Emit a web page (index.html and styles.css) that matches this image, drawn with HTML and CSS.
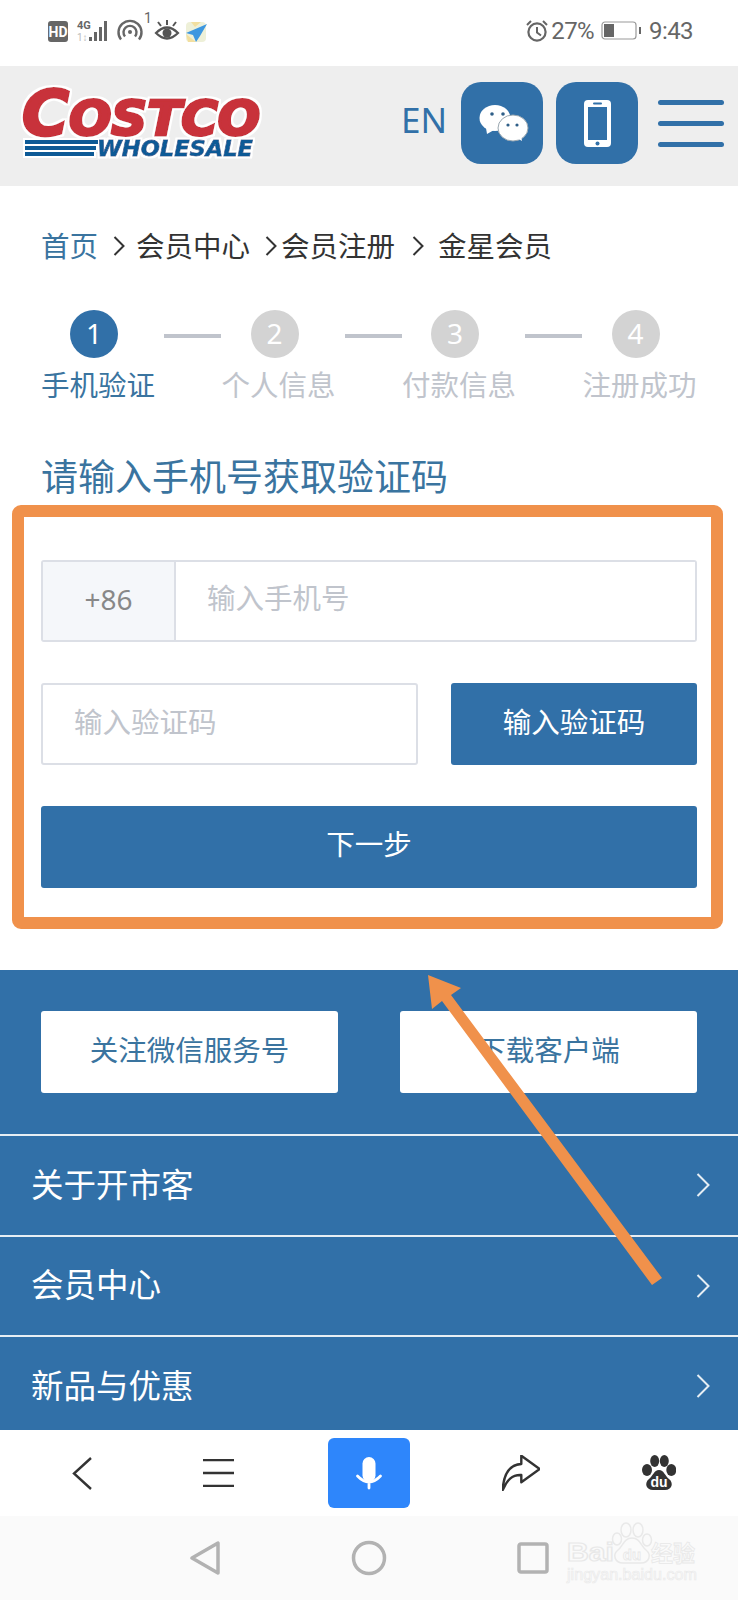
FILE: index.html
```html
<!DOCTYPE html>
<html lang="zh">
<head>
  <meta charset="UTF-8">
  <title>开市客 · 金星会员注册</title>
  <meta name="viewport" content="width=device-width, initial-scale=1.0">
  <link rel="stylesheet" href="styles.css">
</head>
<body>
<div class="screen">

  <div class="status-bar">
    <svg class="status-left" width="170" height="44" viewBox="40 6 170 44">
      <rect x="48" y="21" width="20" height="21" rx="3" fill="#666"/>
      <text x="58" y="36.500" class="st-hd">HD</text>
      <text x="77" y="29" class="st-4g">4G</text>
      <text x="77" y="41" class="st-1">1↕</text>
      <rect x="89" y="37" width="3" height="4" fill="#666"/>
      <rect x="94" y="32" width="3" height="9" fill="#666"/>
      <rect x="99" y="27" width="3" height="14" fill="#666"/>
      <rect x="104" y="21" width="3" height="20" fill="#666"/>
      <path d="M121 39.500a11.500 11.500 0 1 1 18 0" fill="none" stroke="#666" stroke-width="2.400"/>
      <path d="M125 36.500a6.500 6.500 0 1 1 10 0" fill="none" stroke="#666" stroke-width="2.400"/>
      <circle cx="130" cy="32" r="2" fill="#666"/>
      <text x="144" y="23" class="st-n">1</text>
      <path d="M156 33q11 -11 22 0q-11 11 -22 0z" fill="none" stroke="#555" stroke-width="2.200"/>
      <circle cx="167" cy="33" r="4.500" fill="#555"/>
      <path d="M158 22l3 4M167 20v5M176 22l-3 4" stroke="#555" stroke-width="2"/>
      <rect x="186" y="22" width="20" height="20" rx="4" fill="#eef0d8"/>
      <path d="M186 34l10 8h-8zM191 22h10l-6 5z" fill="#f2dfa0"/>
      <path d="M207 24l-21 9 7 2 3 7 4-6z" fill="#3d97e0"/>
    </svg>
    <div class="status-right">
      <svg width="22" height="24" viewBox="0 0 22 24">
        <circle cx="11" cy="13" r="8.600" fill="none" stroke="#666" stroke-width="2.200"/>
        <path d="M11 8v5.500l4 3" fill="none" stroke="#666" stroke-width="2"/>
        <path d="M1 6l4-4M21 6l-4-4" stroke="#666" stroke-width="2"/>
      </svg>
      <span class="pct">27%</span>
      <svg class="battery" width="41" height="20" viewBox="0 0 41 20">
        <rect x="1" y="1" width="34" height="17" rx="3" fill="#fff" stroke="#999" stroke-width="1.200"/>
        <rect x="3" y="3" width="10" height="13" fill="#666"/>
        <rect x="38" y="6" width="2" height="7" fill="#666"/>
      </svg>
      <span class="clock">9:43</span>
    </div>
  </div>

  <header class="site-head">
    <svg class="logo" width="244" height="86" viewBox="0 -12 244 86">
      <defs>
        <filter id="halo" x="-5%" y="-10%" width="110%" height="120%">
          <feMorphology in="SourceAlpha" operator="dilate" radius="2" result="fat"/>
          <feFlood flood-color="#fff"/>
          <feComposite in2="fat" operator="in" result="edge"/>
          <feMerge><feMergeNode in="edge"/><feMergeNode in="SourceGraphic"/></feMerge>
        </filter>
      </defs>
      <g filter="url(#halo)">
        <text x="3" y="48" class="logo-big" textLength="47" lengthAdjust="spacingAndGlyphs">C</text>
        <text x="50" y="48" class="logo-rest" textLength="191" lengthAdjust="spacingAndGlyphs">OSTCO</text>
        <rect x="6" y="53" width="73" height="4" fill="#0f5a96"/>
        <rect x="6" y="59" width="71" height="4" fill="#0f5a96"/>
        <rect x="6" y="65" width="69" height="4" fill="#0f5a96"/>
        <text x="78" y="69" class="logo-sub" textLength="156" lengthAdjust="spacingAndGlyphs">WHOLESALE</text>
      </g>
    </svg>
    <div class="head-tools">
      <span class="lang">EN</span>
      <div class="tool-btn">
        <svg width="82" height="82" viewBox="0 0 82 82">
          <ellipse cx="34" cy="36" rx="15.500" ry="13" fill="#fff"/>
          <path d="M25 46l1 6 7-4z" fill="#fff"/>
          <circle cx="31" cy="32" r="1.800" fill="#2f5f88"/>
          <circle cx="42" cy="32" r="1.800" fill="#2f5f88"/>
          <ellipse cx="52" cy="46" rx="15" ry="13" fill="#fff" stroke="#9aa7b0" stroke-width="1"/>
          <path d="M56 56l5 3-1-6z" fill="#fff"/>
          <circle cx="47" cy="43" r="1.600" fill="#2f5f88"/>
          <circle cx="56" cy="43" r="1.600" fill="#2f5f88"/>
        </svg>
      </div>
      <div class="tool-btn">
        <svg width="82" height="82" viewBox="0 0 82 82">
          <rect x="28" y="18" width="27" height="47" rx="4" fill="#fff"/>
          <rect x="32" y="25" width="19" height="33" fill="#3170a8"/>
          <rect x="37" y="20.500" width="9" height="2" rx="1" fill="#3170a8"/>
          <circle cx="41.500" cy="61.500" r="2" fill="#3170a8"/>
        </svg>
      </div>
      <div class="menu-bars"><i></i><i></i><i></i></div>
    </div>
  </header>

  <main class="content">
    <div class="wrap">
      <div class="crumbs">
        <a class="crumb-home">首页</a>
        <svg class="sep sep-a" width="12" height="20" viewBox="0 0 12 20"><path d="M1.500 1l9 9-9 9"/></svg>
        <span>会员中心</span>
        <svg class="sep sep-b" width="12" height="20" viewBox="0 0 12 20"><path d="M1.500 1l9 9-9 9"/></svg>
        <span>会员注册</span>
        <svg class="sep sep-c" width="12" height="20" viewBox="0 0 12 20"><path d="M1.500 1l9 9-9 9"/></svg>
        <span>金星会员</span>
      </div>

      <div class="steps">
        <div class="step on"><b>1</b><span>手机验证</span></div>
        <div class="step-line"></div>
        <div class="step"><b>2</b><span>个人信息</span></div>
        <div class="step-line"></div>
        <div class="step"><b>3</b><span>付款信息</span></div>
        <div class="step-line"></div>
        <div class="step"><b>4</b><span>注册成功</span></div>
      </div>

      <h2 class="form-title">请输入手机号获取验证码</h2>

      <form class="reg-form">
        <div class="phone-field">
          <span class="prefix">+86</span>
          <input type="text" placeholder="输入手机号">
        </div>
        <div class="code-row">
          <input class="code-input" type="text" placeholder="输入验证码">
          <button type="button" class="btn-blue code-btn">输入验证码</button>
        </div>
        <button type="button" class="btn-blue next-btn">下一步</button>
      </form>
    </div>

    <footer class="site-foot">
      <div class="foot-btns">
        <a class="foot-btn">关注微信服务号</a>
        <a class="foot-btn">下载客户端</a>
      </div>
      <div class="foot-row"><span>关于开市客</span><svg width="14" height="24" viewBox="0 0 14 24"><path d="M1.500 1l11 11-11 11"/></svg></div>
      <div class="foot-row"><span>会员中心</span><svg width="14" height="24" viewBox="0 0 14 24"><path d="M1.500 1l11 11-11 11"/></svg></div>
      <div class="foot-row"><span>新品与优惠</span><svg width="14" height="24" viewBox="0 0 14 24"><path d="M1.500 1l11 11-11 11"/></svg></div>
    </footer>
  </main>

  <div class="toolbar">
    <svg width="20" height="33" viewBox="0 0 20 33"><path class="tb" d="M19 1L2 16.500 19 32"/></svg>
    <svg width="31" height="28" viewBox="0 0 31 28"><path class="tb" d="M0 1h31M0 14h31M0 27h31"/></svg>
    <div class="mic-btn">
      <svg width="82" height="70" viewBox="0 0 82 70">
        <rect x="34.500" y="19" width="13" height="25" rx="6.500" fill="#fff"/>
        <path d="M29.500 38q11.500 12 23 0M41 45v5" fill="none" stroke="#fff" stroke-width="2.800" stroke-linecap="round"/>
      </svg>
    </div>
    <svg width="38" height="36" viewBox="0 0 38 36"><path class="tb" d="M.7 35C1.700 16 10 9.500 19.300 9V.7L37.700 14 19.300 27.300V20C10 19.500 5 25 .7 35z" stroke-linejoin="round"/></svg>
    <svg width="34" height="36" viewBox="0 0 34 36">
      <g fill="#333">
        <ellipse cx="5" cy="15" rx="5" ry="6"/>
        <ellipse cx="12.700" cy="6" rx="4.500" ry="6"/>
        <ellipse cx="22.300" cy="6" rx="4.500" ry="6"/>
        <ellipse cx="29.300" cy="15" rx="5" ry="6"/>
        <path d="M17 15c5 0 6 6 10 9 5 4 3 11-4 11H11c-7 0-9-7-4-11 4-3 5-9 10-9z"/>
      </g>
      <text x="17" y="32" class="paw-du">du</text>
    </svg>
  </div>

  <div class="sys-nav">
    <svg width="30" height="34" viewBox="0 0 30 34"><path class="nv" d="M28 2v30L2 17z"/></svg>
    <svg width="36" height="36" viewBox="0 0 36 36"><circle class="nv" cx="18" cy="18" r="15.500"/></svg>
    <svg width="32" height="32" viewBox="0 0 32 32"><rect class="nv" x="2" y="2" width="28" height="28" rx="2"/></svg>
  </div>

  <svg class="watermark" width="140" height="66" viewBox="0 0 140 66">
    <g class="wm-paw">
      <ellipse cx="53" cy="19" rx="4.500" ry="6"/>
      <ellipse cx="62" cy="10" rx="5" ry="7"/>
      <ellipse cx="74" cy="10" rx="5" ry="7"/>
      <ellipse cx="83" cy="20" rx="4.500" ry="6"/>
      <path d="M68 18c8 0 9 8 14 12 6 5 3 13-5 13H59c-8 0-11-8-5-13 5-4 6-12 14-12z"/>
    </g>
    <text x="3" y="41" class="wm-bai" textLength="47" lengthAdjust="spacingAndGlyphs">Bai</text>
    <text x="68" y="40" class="wm-du">du</text>
    <text x="87" y="41" class="wm-cn">经验</text>
    <text x="3" y="60" class="wm-url" textLength="130" lengthAdjust="spacingAndGlyphs">jingyan.baidu.com</text>
  </svg>

  <svg class="annot" width="738" height="1600" viewBox="0 0 738 1600">
    <rect x="18" y="511" width="699" height="412" rx="3" fill="none" stroke="#f0914b" stroke-width="12"/>
    <path d="M428 975L461 988 451 995 662 1278 652 1285 442 1001 432 1009z" fill="#f0914b"/>
  </svg>

</div>
</body>
</html>
```

FILE: styles.css
```css
* { box-sizing: border-box; }
html, body { margin: 0; padding: 0; background: #fff; }
body { font-family: "Noto Sans CJK SC", "Noto Sans", sans-serif; }
svg { display: block; }
.screen { position: relative; display: flex; flex-direction: column; width: 738px; height: 1600px; overflow: hidden; }

/* phone status bar */
.status-bar { flex: none; display: flex; justify-content: space-between; height: 66px; padding: 6px 45px 0 40px; background: #fff; }
.st-hd { font: bold 14px "Roboto", sans-serif; fill: #fff; text-anchor: middle; }
.st-4g { font: bold 11px "Roboto", sans-serif; fill: #666; }
.st-1 { font: 10px "Roboto", sans-serif; fill: #bbb; }
.st-n { font: 14px "Roboto", sans-serif; fill: #666; }
.status-right { display: flex; align-items: center; height: 50px; color: #666; font: 24px "Roboto", sans-serif; letter-spacing: -0.6px; }
.pct { margin-left: 3px; }
.battery { margin-left: 7px; }
.clock { margin-left: 7px; }

/* site header */
.site-head { flex: none; display: flex; justify-content: space-between; align-items: flex-start; height: 120px; padding: 16px 14px 0 19px; background: #eee; }
.logo { margin-top: -7px; }
.logo-big { font: italic bold 62px "DejaVu Sans", sans-serif; fill: #c8323a; stroke: #c8323a; stroke-width: 3; }
.logo-rest { font: italic bold 48px "DejaVu Sans", sans-serif; fill: #c8323a; stroke: #c8323a; stroke-width: 3; }
.logo-sub { font: italic bold 22px "DejaVu Sans", sans-serif; fill: #0f5a96; stroke: #0f5a96; stroke-width: .8; }
.head-tools { display: flex; align-items: flex-start; }
.lang { margin-right: 14px; color: #3170a8; font: 35px/76px "Noto Sans", sans-serif; }
.tool-btn { width: 82px; height: 82px; margin-right: 13px; border-radius: 20px; background: #3170a8; }
.menu-bars { display: flex; flex-direction: column; gap: 16px; width: 66px; margin: 18px 0 0 7px; }
.menu-bars i { display: block; height: 5px; border-radius: 3px; background: #3170a8; }

/* page body */
.content { flex: 1; min-height: 0; overflow: hidden; background: #fff; }
.wrap { padding: 39px 41px 0; }
.crumbs { display: flex; align-items: center; height: 40px; color: #333; font-size: 28.500px; line-height: 40px; }
.crumb-home { color: #3a749f; }
.sep { fill: none; stroke: #333; stroke-width: 2; }
.sep-a { margin: 2px 11px 0 15px; }
.sep-b { margin: 2px 4px 0 15px; }
.sep-c { margin: 2px 14px 0 17px; }

.steps { display: flex; margin-top: 45px; }
.step { display: flex; flex-direction: column; align-items: center; width: 114px; }
.step b { width: 48px; height: 48px; margin-right: 8px; border-radius: 50%; background: #d3d3d3; color: #fff; font: 28px/46px "Noto Sans", sans-serif; text-align: center; }
.step span { margin-top: 6px; color: #c0c4cc; font-size: 28.500px; line-height: 40px; white-space: nowrap; }
.step.on b { background: #3170a8; }
.step.on span { color: #3a749f; }
.step-line { width: 57px; height: 4px; margin: 24px .5px 0 9px; background: #c0c4cc; }

.form-title { margin: 46px 0 0; color: #3a749f; font-size: 37px; font-weight: 400; line-height: 50px; white-space: nowrap; }

.reg-form { margin-top: 60px; }
.phone-field { display: flex; height: 82px; border: 2px solid #dcdfe6; border-radius: 3px; }
.prefix { flex: none; width: 133px; border-right: 2px solid #dcdfe6; background: #f5f7fa; color: #888; font: 28px/74px "Noto Sans", sans-serif; text-align: center; }
input { min-width: 0; border: 0; outline: 0; background: #fff; color: #333; font: 28.500px "Noto Sans CJK SC", sans-serif; }
input::placeholder { color: #c0c4cc; opacity: 1; }
.phone-field input { flex: 1; padding: 0 0 10px 31px; }
.code-row { display: flex; justify-content: space-between; margin-top: 41px; }
.code-input { width: 377px; height: 82px; padding: 0 0 8px 31px; border: 2px solid #dcdfe6; border-radius: 3px; }
.btn-blue { display: block; height: 82px; padding: 0 0 8px; border: 0; border-radius: 3px; background: #3170a8; color: #fff; font: 28.500px "Noto Sans CJK SC", sans-serif; }
.code-btn { width: 246px; }
.next-btn { width: 100%; margin-top: 41px; padding-bottom: 10px; }

/* blue footer */
.site-foot { margin-top: 82px; background: #3170a8; color: #fff; }
.foot-btns { display: flex; justify-content: space-between; padding: 41px; }
.foot-btn { width: 297px; height: 82px; border-radius: 3px; background: #fff; color: #3a749f; font-size: 28.500px; line-height: 75px; text-align: center; }
.foot-row { display: flex; justify-content: space-between; align-items: center; height: 100.500px; padding: 0 28px 0 31px; border-top: 2px solid #e6eef4; font-size: 32.500px; }
.foot-row span { margin-bottom: 6px; }
.foot-row svg { fill: none; stroke: #e6eef4; stroke-width: 2; }

/* browser toolbar */
.toolbar { flex: none; display: grid; grid-template-columns: 156px 116px 186px 118px 158px; justify-items: center; align-items: center; height: 86px; padding-left: 4px; background: #fff; }
.tb { fill: none; stroke: #333; stroke-width: 2.400; }
.mic-btn { width: 82px; height: 70px; border-radius: 6px; background: #2e86fb; }
.paw-du { font: bold 14px "Liberation Sans", sans-serif; fill: #fff; text-anchor: middle; }

/* system nav */
.sys-nav { flex: none; display: flex; align-items: center; gap: 130.500px; height: 84px; padding-left: 190px; background: #fafafa; }
.nv { fill: none; stroke: #b2b2b2; stroke-width: 3.500; stroke-linejoin: round; }

/* things lying on top of the screenshot */
.watermark { position: absolute; left: 564px; top: 1520px; }
.wm-paw { fill: #fafafa; stroke: #e9e9e9; stroke-width: 1.500; }
.wm-bai { font: bold 25px "Liberation Sans", sans-serif; fill: #fafafa; stroke: #e8e8e8; stroke-width: 1.200; }
.wm-du { font: bold 15px "Liberation Sans", sans-serif; fill: #fafafa; stroke: #e8e8e8; stroke-width: .8; text-anchor: middle; }
.wm-cn { font: bold 22px "Noto Sans CJK SC", sans-serif; fill: #fafafa; stroke: #e8e8e8; stroke-width: .8; }
.wm-url { font: 16px "Liberation Sans", sans-serif; fill: #fafafa; stroke: #eaeaea; stroke-width: .7; }
.annot { position: absolute; left: 0; top: 0; pointer-events: none; }
```
